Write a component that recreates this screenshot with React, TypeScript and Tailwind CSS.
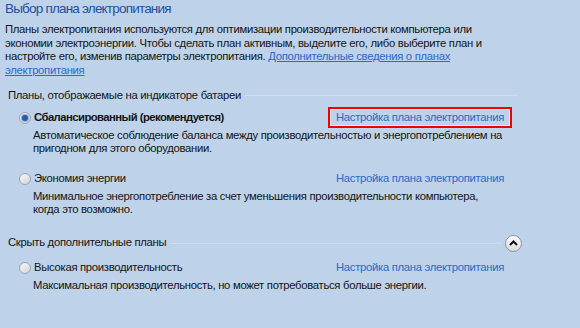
import React from "react";

type Plan = {
  id: string;
  name: string;
  desc: string[];
  checked?: boolean;
  highlight?: boolean;
};

const plans: Plan[] = [
  {
    id: "balanced",
    name: "Сбалансированный (рекомендуется)",
    desc: [
      "Автоматическое соблюдение баланса между производительностью и энергопотреблением на",
      "пригодном для этого оборудовании.",
    ],
    checked: true,
    highlight: true,
  },
  {
    id: "saver",
    name: "Экономия энергии",
    desc: ["Минимальное энергопотребление за счет уменьшения производительности компьютера,", "когда это возможно."],
  },
];

const extraPlan: Plan = {
  id: "high",
  name: "Высокая производительность",
  desc: ["Максимальная производительность, но может потребоваться больше энергии."],
};

const Radio = ({ checked }: { checked?: boolean }) => (
  <span className="w-[12px] h-[12px] rounded-full border border-[#9aa3ad] bg-gradient-to-br from-[#f7f7f7] to-[#d2d6da] flex items-center justify-center shrink-0">
    {checked && <span className="w-[6px] h-[6px] rounded-full bg-[#2b5ea6] ring-1 ring-[#8fb0da]" />}
  </span>
);

const PlanRow = ({ plan }: { plan: Plan }) => (
  <div className="pl-[14px]">
    <div className="flex items-center h-[22px]">
      <label className="w-[309px] flex items-center gap-[3px]">
        <Radio checked={plan.checked} />
        <span className={plan.checked ? "font-bold tracking-[-0.55px]" : ""}>{plan.name}</span>
      </label>
      <span
        className={
          "text-[#2a6ac8] leading-[17px] px-[6px] tracking-[-0.3px] border-[2px] " +
          (plan.highlight ? "border-[#f00000] shadow-[inset_0_0_0_1px_#dfe8f3]" : "border-transparent")
        }
      >
        Настройка плана электропитания
      </span>
    </div>
    <p className="pl-[14px]">
      {plan.desc.map((l, i) => (
        <span key={i} className="block">
          {l}
        </span>
      ))}
    </p>
  </div>
);

export default function App() {
  return (
    <div
      className="w-[580px] h-[328px] overflow-hidden bg-[#bed3e9] text-[#141414] text-[11.3px] leading-[13.5px] tracking-[-0.3px]"
      style={{ fontFamily: '"Liberation Sans", Arial, sans-serif' }}
    >
      <div className="px-[5px]">
        <h1 className="text-[13.5px] leading-[18px] text-[#1f50a2] tracking-[-0.8px]">Выбор плана электропитания</h1>
        <p className="mt-[5px]">
          Планы электропитания используются для оптимизации производительности компьютера или
          <br />
          экономии электроэнергии. Чтобы сделать план активным, выделите его, либо выберите план и
          <br />
          настройте его, изменив параметры электропитания.{" "}
          <a className="text-[#2a6ac8] underline">Дополнительные сведения о планах</a>
          <br />
          <a className="text-[#2a6ac8] underline">электропитания</a>
        </p>

        <div className="flex items-center gap-[4px] mt-[12px] pl-[3px] pr-[58px]">
          <span>Планы, отображаемые на индикаторе батареи</span>
          <span className="flex-1 h-px bg-[#d3dde8]" />
        </div>

        <div className="mt-[4px] flex flex-col gap-[12px]">
          {plans.map(p => (
            <PlanRow key={p.id} plan={p} />
          ))}
        </div>

        <div className="flex items-center gap-[4px] mt-[18px] pl-[3px] pr-[53px]">
          <span>Скрыть дополнительные планы</span>
          <span className="flex-1 h-px bg-[#d3dde8]" />
          <span className="w-[17px] h-[17px] rounded-full border border-[#8c949c] bg-gradient-to-b from-[#fbfbfb] to-[#d9dcdf] flex items-center justify-center">
            <svg width="9" height="6" viewBox="0 0 9 6">
              <path d="M1 5 L4.5 1.5 L8 5" fill="none" stroke="#111" strokeWidth="2" />
            </svg>
          </span>
        </div>

        <div className="mt-[5px]">
          <PlanRow plan={extraPlan} />
        </div>
      </div>
    </div>
  );
}
